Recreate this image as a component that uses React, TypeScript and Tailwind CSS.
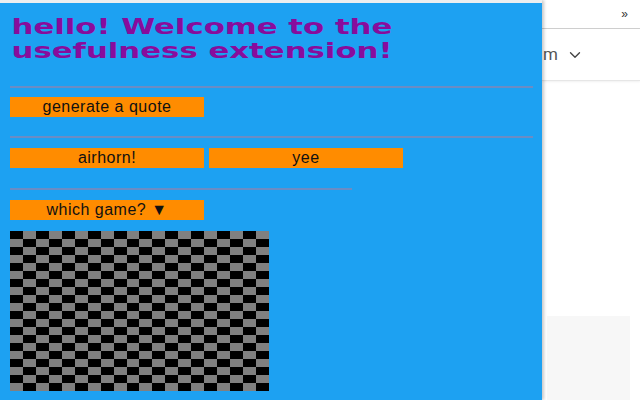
import { ChevronDown } from "lucide-react";

// popup of the usefulness extension, opened over a page on the right

const cells = Array.from({ length: 400 }, (_, i) => {
  const row = Math.floor(i / 20);
  const col = i % 20;
  return (row + col) % 2 === 0;
});

function OrangeButton({ children }: { children: React.ReactNode }) {
  return (
    <button className="block h-[20px] w-[194px] bg-[#ff8c00] text-[16px] leading-[20px] tracking-[0.5px] text-[#111] font-['Liberation_Sans',Arial,sans-serif]">
      {children}
    </button>
  );
}

function Rule({ short }: { short?: boolean }) {
  return <div className={`${short ? "w-[342px]" : "w-[523px]"} h-[2px] bg-[#6b8cc4]`} />;
}

export default function App() {
  return (
    <div className="flex h-[400px] w-[640px] overflow-hidden bg-white">
      <div className="relative z-10 flex w-[542px] flex-col shadow-[2px_0_3px_rgba(0,0,0,0.22)]">
        <div className="h-[3px] bg-[#eceef0]" />
        <div className="flex flex-1 flex-col bg-[#1da1f2] pl-[10px]">
          <h1 className="mt-[13px] origin-left scale-x-[1.5] whitespace-nowrap pl-[1px] text-[20.5px] leading-[23.5px] font-bold text-[#880c9c] font-['DejaVu_Sans',Verdana,sans-serif]">
            hello! Welcome to the
            <br />
            usefulness extension!
          </h1>

          <div className="mt-[23px] flex">
            <Rule />
          </div>
          <div className="mt-[9px] flex">
            <OrangeButton>generate a quote</OrangeButton>
          </div>

          <div className="mt-[19px] flex">
            <Rule />
          </div>
          <div className="mt-[10px] flex gap-[5px]">
            <OrangeButton>airhorn!</OrangeButton>
            <OrangeButton>yee</OrangeButton>
          </div>

          <div className="mt-[20px] flex">
            <Rule short />
          </div>
          <div className="mt-[10px] flex">
            <OrangeButton>which game? ▼</OrangeButton>
          </div>

          <div className="mt-[11px] grid h-[160px] w-[259px] grid-cols-20 grid-rows-20">
            {cells.map((dark, i) => (
              <div key={i} className={dark ? "bg-black" : "bg-[#808080]"} />
            ))}
          </div>
        </div>
      </div>

      <div className="flex flex-1 flex-col bg-white">
        <div className="flex h-[29px] items-center justify-end border-b border-[#cfcfcf] pr-[12px] text-[12px] text-[#333] font-['Liberation_Sans',Arial,sans-serif]">
          »
        </div>
        <div className="flex h-[52px] items-center gap-[8px] border-b border-[#e6e6e6] pl-[1px] shadow-[0_1px_2px_rgba(0,0,0,0.06)] text-[17px] text-[#555] font-['Roboto',sans-serif]">
          <span>m</span>
          <ChevronDown size={18} strokeWidth={1.8} className="text-[#444]" />
        </div>
        <div className="h-[235px]" />
        <div className="ml-[5px] w-[83px] flex-1 bg-[#f7f7f7]" />
      </div>
    </div>
  );
}
